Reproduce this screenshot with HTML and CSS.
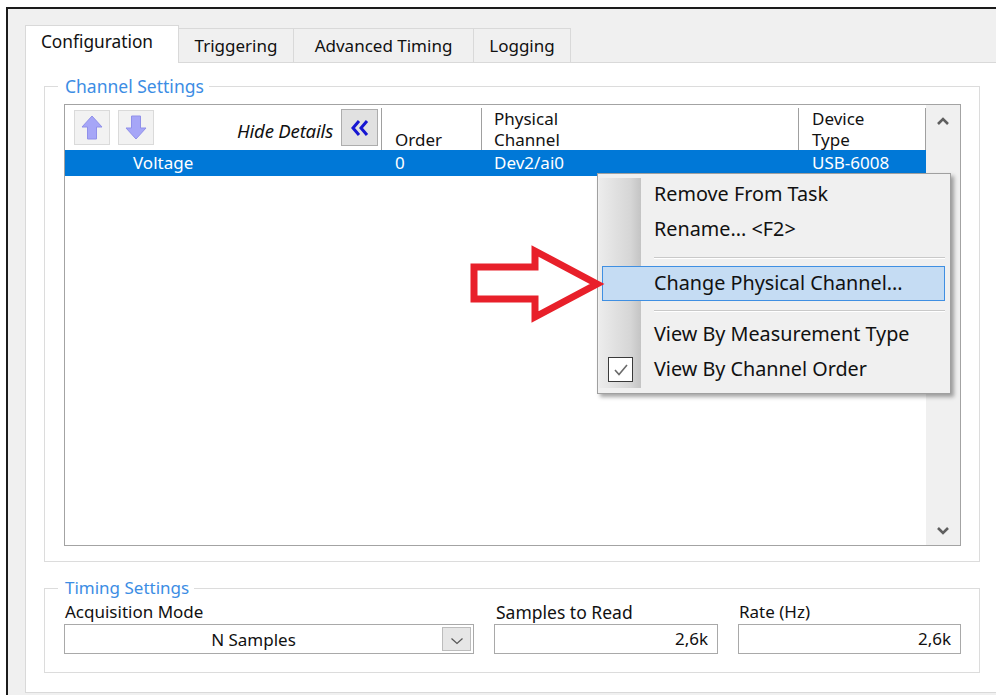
FILE: index.html
```html
<!DOCTYPE html>
<html lang="en">
<head>
<meta charset="utf-8">
<title>DAQ Assistant - Configuration</title>
<link rel="stylesheet" href="styles.css">
</head>
<body>
<div class="window">
  <div class="tabs">
    <div class="tab active">Configuration</div>
    <div class="tab tab-trig">Triggering</div>
    <div class="tab tab-adv">Advanced Timing</div>
    <div class="tab tab-log">Logging</div>
  </div>

  <div class="panel">
    <fieldset class="group channels">
      <legend>Channel Settings</legend>
      <div class="list">
        <div class="list-main">
          <div class="list-head">
            <div class="hcell tools">
              <button class="arrow-btn" type="button" aria-label="Move up">
                <svg width="22" height="25" viewBox="0 0 22 25"><polygon points="11,1 21,12 15.5,12 15.5,24 6.5,24 6.5,12 1,12" fill="#a6a6f7" stroke="#9090ea" stroke-width="1"/></svg>
              </button>
              <button class="arrow-btn" type="button" aria-label="Move down">
                <svg width="22" height="25" viewBox="0 0 22 25"><polygon points="11,24 21,13 15.5,13 15.5,1 6.5,1 6.5,13 1,13" fill="#a6a6f7" stroke="#9090ea" stroke-width="1"/></svg>
              </button>
              <span class="hide-details">Hide Details</span>
              <button class="collapse-btn" type="button" aria-label="Hide details">
                <svg width="20" height="18" viewBox="0 0 20 18"><polyline points="9,2 3,9 9,16" fill="none" stroke="#1616d2" stroke-width="3"/><polyline points="17,2 11,9 17,16" fill="none" stroke="#1616d2" stroke-width="3"/></svg>
              </button>
            </div>
            <div class="hcell">Order</div>
            <div class="hcell">Physical<br>Channel</div>
            <div class="hcell">Device<br>Type</div>
          </div>
          <div class="list-row selected">
            <div class="cell cell-name">Voltage</div>
            <div class="cell">0</div>
            <div class="cell">Dev2/ai0</div>
            <div class="cell">USB-6008</div>
          </div>
        </div>
        <div class="vscroll">
          <svg width="14" height="10" viewBox="0 0 14 10"><polyline points="2,8 7,3 12,8" fill="none" stroke="#5f5f5f" stroke-width="2.6"/></svg>
          <svg width="14" height="10" viewBox="0 0 14 10"><polyline points="2,2 7,7 12,2" fill="none" stroke="#5f5f5f" stroke-width="2.6"/></svg>
        </div>
      </div>
    </fieldset>

    <fieldset class="group timing">
      <legend>Timing Settings</legend>
      <div class="timing-grid">
        <div class="field">
          <div class="field-label">Acquisition Mode</div>
          <div class="combo">
            <span class="combo-value">N Samples</span>
            <span class="combo-btn">
              <svg width="14" height="8" viewBox="0 0 14 8"><polyline points="1.5,1.5 7,6.5 12.5,1.5" fill="none" stroke="#555" stroke-width="1.2"/></svg>
            </span>
          </div>
        </div>
        <div class="field">
          <div class="field-label label-samples">Samples to Read</div>
          <div class="num-input">2,6k</div>
        </div>
        <div class="field">
          <div class="field-label">Rate (Hz)</div>
          <div class="num-input">2,6k</div>
        </div>
      </div>
    </fieldset>
  </div>
</div>

<ul class="context-menu">
  <li class="menu-item"><span class="menu-icon"></span><span>Remove From Task</span></li>
  <li class="menu-item"><span class="menu-icon"></span><span>Rename... &lt;F2&gt;</span></li>
  <li class="menu-sep sep-a"></li>
  <li class="menu-item hover"><span class="menu-icon"></span><span>Change Physical Channel...</span></li>
  <li class="menu-sep sep-b"></li>
  <li class="menu-item"><span class="menu-icon"></span><span>View By Measurement Type</span></li>
  <li class="menu-item"><span class="menu-icon"><span class="check">
    <svg width="20" height="20" viewBox="0 0 20 20"><polyline points="4,10 8,14.5 16,5" fill="none" stroke="#6a6a6a" stroke-width="1.6"/></svg>
  </span></span><span>View By Channel Order</span></li>
</ul>

<svg class="pointer-arrow" width="140" height="84" viewBox="0 0 140 84">
  <polygon points="8,25 69,25 69,9 131,42 69,75 69,57 8,57" fill="#ffffff" stroke="#e8202a" stroke-width="7" stroke-linejoin="miter"/>
</svg>
</body>
</html>
```

FILE: styles.css
```css
* {
  box-sizing: border-box;
}

html, body {
  margin: 0;
  height: 100%;
}

body {
  position: relative;
  overflow: hidden;
  background: #ffffff;
  font-family: "Noto Sans", "Open Sans", sans-serif;
  font-size: 17px;
  color: #111111;
}

/* dialog frame with dark top/left edge */
.window {
  margin: 7px 0 0 6px;
  height: calc(100% - 7px);
  border-top: 2px solid #1b1b1b;
  border-left: 2px solid #1b1b1b;
  background: #f0f0f0;
  padding: 16px 0 0 17px;
}

/* tab strip */
.tabs {
  display: flex;
  align-items: flex-end;
  height: 37px;
}

.tab {
  height: 34px;
  border: 1px solid #d9d9d9;
  border-left: none;
  border-bottom: none;
  background: #f0f0f0;
  display: flex;
  align-items: center;
  justify-content: center;
  line-height: 1;
  padding-bottom: 1px;
}

.tab.active {
  position: relative;
  z-index: 1;
  width: 154px;
  height: 38px;
  margin-bottom: -1px;
  border-left: 1px solid #d9d9d9;
  background: #ffffff;
  padding: 0 10px 6px 0;
  font-size: 17.3px;
}

.tab-trig { width: 115px; }
.tab-adv  { width: 180px; }
.tab-log  { width: 97px; }

/* tab page */
.panel {
  width: 1000px;
  background: #ffffff;
  border: 1px solid #d9d9d9;
  padding: 12px 0 19px 18px;
}

.group {
  margin: 0;
  min-width: 0;
  width: 936px;
  border: 1px solid #dcdcdc;
}

.group legend {
  margin-left: -6px;
  padding: 0 5px 0 7px;
  line-height: 22px;
  color: #3c8de4;
  font-size: 17.5px;
}

.channels {
  padding: 7px 18px 15px 19px;
}

.timing {
  margin-top: 15px;
  padding: 2px 18px 18px 19px;
}

.timing legend {
  font-size: 17px;
}

/* channel list */
.list {
  display: flex;
  height: 442px;
  border: 1px solid #a3a3a3;
}

.list-main {
  flex: 1;
  background: #ffffff;
}

.list-head,
.list-row {
  display: grid;
  grid-template-columns: 317px 100px 317px 127px;
}

.list-head {
  height: 45px;
  padding-top: 3px;
}

.hcell {
  border-right: 1px solid #a0a0a0;
  line-height: 21px;
  padding-left: 13px;
  display: flex;
  align-items: flex-end;
}

.hcell:nth-child(3) {
  padding-left: 12px;
}

.hcell.tools {
  padding: 0 3px 3px 9px;
  align-items: center;
}

.arrow-btn {
  width: 36px;
  height: 35px;
  margin: 0 8px 0 0;
  padding: 0;
  border: 1px solid #dadada;
  background: #f2f2f2;
  display: flex;
  align-items: center;
  justify-content: center;
}

.hide-details {
  margin-left: auto;
  margin-top: 6px;
  font-style: italic;
  font-size: 18.6px;
  letter-spacing: -0.2px;
}

.collapse-btn {
  width: 37px;
  height: 37px;
  margin-left: 8px;
  padding: 0;
  border: 1px solid #adadad;
  background: #e1e1e1;
  display: flex;
  align-items: center;
  justify-content: center;
}

.list-row {
  height: 26px;
  line-height: 26px;
}

.list-row.selected {
  background: #0078d7;
  color: #ffffff;
}

.cell {
  padding-left: 13px;
}

.cell:nth-child(3) {
  padding-left: 12px;
}

.cell-name {
  padding-left: 68px;
}

.vscroll {
  width: 34px;
  background: #f0f0f0;
  display: flex;
  flex-direction: column;
  justify-content: space-between;
  align-items: center;
  padding: 11px 0 9px;
}

/* timing settings */
.timing-grid {
  display: grid;
  grid-template-columns: 410px 224px 223px;
  column-gap: 20px;
}

.field-label {
  line-height: 22px;
  margin-bottom: 1px;
  padding-left: 1px;
}

.label-samples {
  padding-left: 2px;
  font-size: 17.5px;
}

.combo,
.num-input {
  height: 30px;
  border: 1px solid #a9a9a9;
  background: #ffffff;
}

.combo {
  display: flex;
  align-items: center;
  padding: 2px 2px 2px 0;
}

.combo-value {
  flex: 1;
  text-align: center;
}

.combo-btn {
  width: 29px;
  height: 24px;
  border: 1px solid #bcbcbc;
  background: #e6e6e6;
  display: flex;
  align-items: center;
  justify-content: center;
  padding-top: 3px;
}

.num-input {
  text-align: right;
  line-height: 28px;
  padding-right: 9px;
}

/* popup menu */
.context-menu {
  position: absolute;
  left: 597px;
  top: 173px;
  z-index: 5;
  width: 354px;
  margin: 0;
  padding: 3px 5px 6px 4px;
  list-style: none;
  border: 1px solid #a0a0a0;
  background:
    linear-gradient(to right, #ececec, #d6d6d6 75%, #c4c4c4) 1px 4px / 42px calc(100% - 9px) no-repeat,
    #f0f0f0;
  box-shadow: 3px 3px 4px rgba(0, 0, 0, 0.35);
  font-size: 19.8px;
  color: #111111;
}

.menu-item {
  display: flex;
  align-items: center;
  height: 35px;
  border: 1px solid transparent;
  padding-bottom: 2px;
}

.menu-item.hover {
  background: #c5dcf3;
  border-color: #3f8fe2;
}

.menu-icon {
  width: 51px;
  flex: none;
  display: flex;
  align-items: center;
  padding: 2px 0 0 5px;
}

.check {
  width: 25px;
  height: 25px;
  border: 1.5px solid #3a3a3a;
  background: #ffffff;
  display: flex;
  align-items: center;
  justify-content: center;
}

.menu-sep {
  margin-left: 52px;
  height: 2px;
  border-top: 1px solid #c9c9c9;
  border-bottom: 1px solid #ffffff;
}

.sep-a {
  margin-top: 10px;
  margin-bottom: 7px;
}

.sep-b {
  margin-top: 9px;
  margin-bottom: 5px;
}

/* red call-out pointing at the menu entry */
.pointer-arrow {
  position: absolute;
  left: 466px;
  top: 242px;
  z-index: 6;
}
```
